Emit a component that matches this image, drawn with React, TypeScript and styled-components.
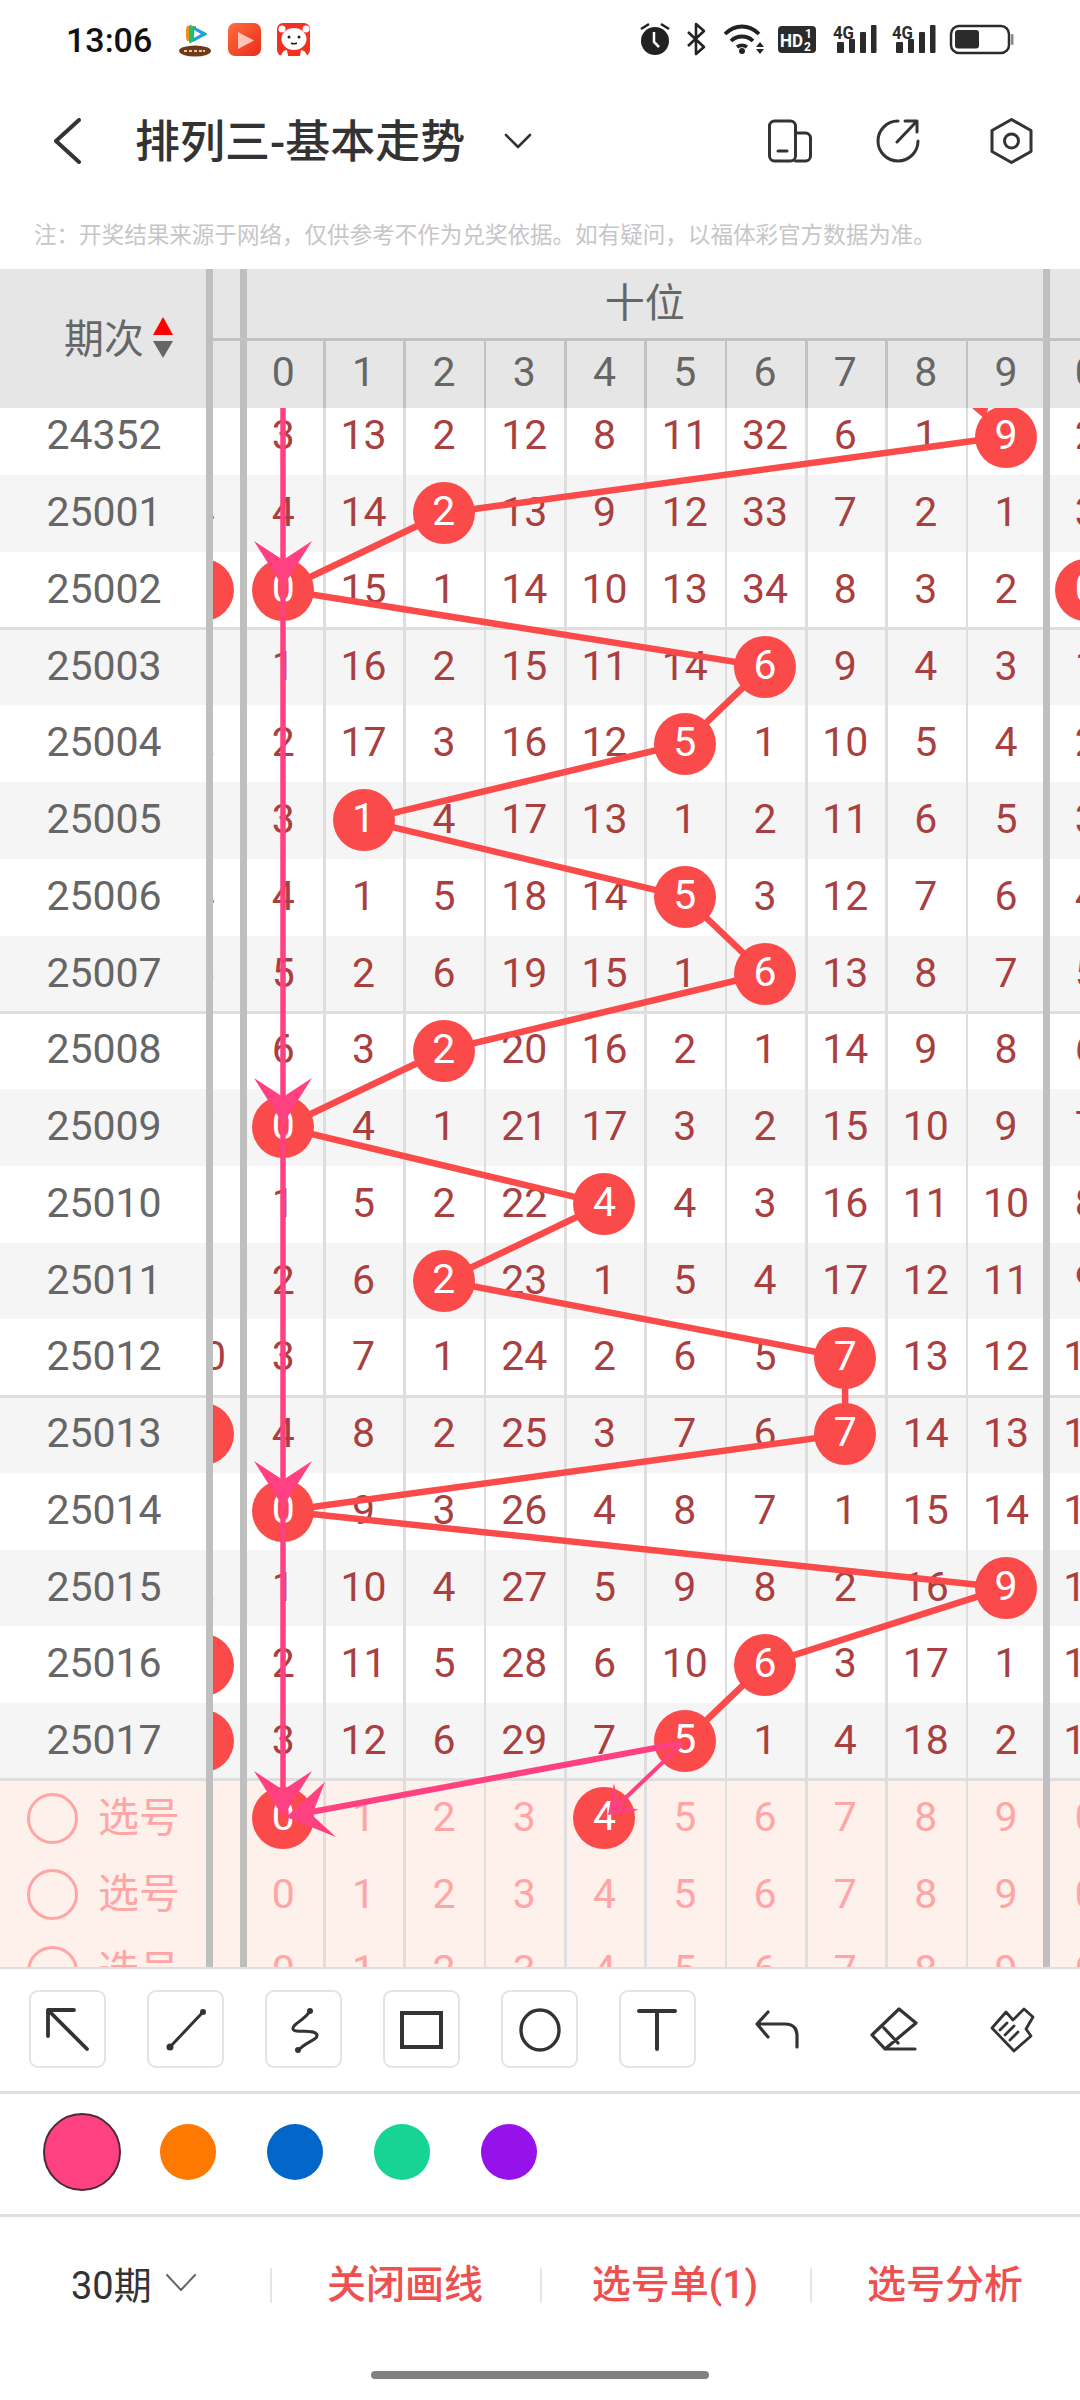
import React from "react";
import styled, { createGlobalStyle } from "styled-components";

const FONT = `Roboto, "Noto Sans CJK SC", sans-serif`;
const RED = "#fb4a4a";
const PINK = "#ff4081";
const INK = "#333";

const Global = createGlobalStyle`
  html, body { margin: 0; padding: 0; background: #fff; }
  body { width: 1080px; height: 2400px; overflow: hidden; font-family: ${FONT}; }
`;

const Page = styled.div`
  width: 1080px;
  height: 2400px;
  display: flex;
  flex-direction: column;
  overflow: hidden;
  background: #fff;
`;

/* ---------- status bar ---------- */
const StatusBar = styled.div`
  height: 80px;
  display: flex;
  align-items: center;
  padding: 0 66px 0 66px;
`;
const Clock = styled.span`
  font-size: 34px;
  font-weight: 500;
  color: #111;
  width: 112px;
  line-height: 1;
`;
const StatusGlyphs = styled.svg`
  display: block;
  margin-left: ${(p) => p.$left || 0}px;
`;

/* ---------- nav ---------- */
const NavBar = styled.div`
  height: 122px;
  display: flex;
  align-items: center;
  padding: 0 46px 0 54px;
`;
const NavGlyph = styled.svg`
  display: block;
  flex: none;
  fill: none;
  stroke: ${INK};
  stroke-linecap: round;
  stroke-linejoin: round;
  margin-left: ${(p) => p.$left || 0}px;
`;
const Title = styled.h1`
  margin: 2px 0 0 53px;
  font-size: 45px;
  font-weight: 500;
  line-height: 1;
  color: ${INK};
  white-space: nowrap;
`;
const Spacer = styled.div`
  flex: 1;
`;
const Note = styled.div`
  height: 67px;
  padding: 0 0 6px 34px;
  box-sizing: border-box;
  display: flex;
  align-items: center;
  font-size: 22.55px;
  color: #c6c6c6;
  white-space: nowrap;
`;

/* ---------- table ---------- */
const PITCH = 80.3;
const Sep = styled.div`
  flex: none;
  width: 7px;
  margin: 0 ${(p) => (p.$inner ? "-4px 0 -3px" : "0")};
  background: #bfbfbf;
  position: relative;
  z-index: 2;
  align-self: stretch;
`;
const HeaderWrap = styled.div`
  height: 139px;
  display: flex;
  background: #e6e6e6;
  position: relative;
  z-index: 6;
  color: #666;
`;
const CornerCell = styled.div`
  width: 206px;
  flex: none;
  box-sizing: border-box;
  padding: 0 0 5px 64px;
  display: flex;
  align-items: center;
  gap: 9px;
  font-size: 40px;
`;
const SortMark = styled.div`
  display: flex;
  flex-direction: column;
  gap: 6px;
  margin-top: 3px;
`;
const Tri = styled.i`
  display: block;
  width: 0;
  height: 0;
  border-left: 10.5px solid transparent;
  border-right: 10.5px solid transparent;
  ${(p) =>
    p.$up
      ? "border-bottom: 18px solid #f00;"
      : "border-top: 17px solid #666;"}
`;
const Track = styled.div`
  flex: 1;
  min-width: 0;
  overflow: hidden;
  display: flex;
  flex-direction: column;
`;
const TrackRow = styled.div`
  display: flex;
  flex: ${(p) => (p.$fill ? "1" : "none")};
  height: ${(p) => (p.$h ? `${p.$h}px` : "auto")};
  margin-left: -50.15px;
  width: 1200px;
  box-sizing: border-box;
  ${(p) => (p.$ruled ? "border-bottom: 3px solid #c2c2c2;" : "")}
`;
const GroupTitle = styled.div`
  width: ${(p) => p.$w}px;
  flex: none;
  box-sizing: border-box;
  padding-bottom: 7px;
  display: flex;
  align-items: center;
  justify-content: center;
  font-size: 40px;
`;
const HeadCell = styled.div`
  width: ${PITCH}px;
  flex: none;
  position: relative;
  text-align: center;
  font-size: 41px;
  line-height: 63px;
  &::after {
    content: "";
    position: absolute;
    top: 0;
    bottom: 0;
    right: -2.3px;
    width: 2.6px;
    background: #c2c2c2;
  }
`;
const Body = styled.div`
  height: 1559px;
  position: relative;
  overflow: hidden;
`;
const Rows = styled.div`
  margin-top: -9.7px;
`;
const Row = styled.div`
  height: 76.75px;
  display: flex;
  position: relative;
  background: ${(p) => (p.$pick ? "#fef0ea" : p.$alt ? "#f5f5f5" : "#fff")};
  ${(p) =>
    p.$rule
      ? `&::after {
           content: "";
           position: absolute;
           left: 0;
           right: 0;
           bottom: -1.5px;
           height: 3px;
           background: #dedede;
           z-index: 1;
         }`
      : ""}
`;
const PeriodCell = styled.div`
  width: 206px;
  flex: none;
  box-sizing: border-box;
  padding-left: 2px;
  text-align: center;
  font-size: 41px;
  line-height: 75px;
  color: #666;
`;
const PickCell = styled.div`
  width: 206px;
  flex: none;
  box-sizing: border-box;
  padding: 0 0 9px 27px;
  display: flex;
  align-items: center;
  gap: 20px;
  font-size: 41px;
  color: #ffa5a5;
`;
const PickRing = styled.i`
  display: block;
  width: 51px;
  height: 51px;
  box-sizing: border-box;
  border: 3px solid #ffa5a5;
  border-radius: 50%;
  margin-top: 9px;
`;
const BodyTrack = styled.div`
  flex: 1;
  min-width: 0;
  overflow: hidden;
  display: flex;
`;
const BodyInner = styled.div`
  display: flex;
  margin-left: -50.15px;
  width: 1200px;
  flex: none;
`;
const Cell = styled.div`
  width: ${PITCH}px;
  flex: none;
  position: relative;
  text-align: center;
  font-size: 41px;
  line-height: 75px;
  color: ${(p) => (p.$pick ? "#ffa5a5" : "#a93f3f")};
  &::after {
    content: "";
    position: absolute;
    top: 0;
    bottom: 0;
    right: -2.3px;
    width: 2.6px;
    background: #dedede;
  }
`;
const Ball = styled.div`
  position: absolute;
  left: 50%;
  top: 50%;
  width: 62px;
  height: 62px;
  margin: -31px 0 0 -31px;
  border-radius: 50%;
  background: ${RED};
  color: #fff;
  line-height: 59px;
  z-index: 4;
`;
const Overlay = styled.svg`
  position: absolute;
  left: 0;
  top: 0;
  z-index: ${(p) => p.$z};
  pointer-events: none;
`;
const TableEnd = styled.div`
  height: 2px;
  background: #dedede;
  flex: none;
`;

/* ---------- tools ---------- */
const ToolBar = styled.div`
  box-sizing: border-box;
  padding: 21px 0 0 29px;
  display: flex;
  gap: 41.1px;
  align-items: flex-start;
  border-bottom: 3px solid #e0e0e0;
  flex: none;
  height: 125px;
`;
const Tool = styled.div`
  width: 77px;
  height: 78px;
  flex: none;
  box-sizing: border-box;
  border: ${(p) => (p.$plain ? "2px solid transparent" : "2px solid #e4e4e4")};
  border-radius: 9px;
  display: flex;
`;
const ToolGlyph = styled.svg`
  display: block;
  margin: -2px;
  fill: none;
  stroke: ${INK};
  stroke-width: 3.4;
  stroke-linecap: round;
  stroke-linejoin: round;
`;
const SwatchBar = styled.div`
  height: 123px;
  box-sizing: border-box;
  padding: 0 0 5px 43px;
  display: flex;
  align-items: center;
  gap: 51px;
  border-bottom: 3px solid #e0e0e0;
  flex: none;
`;
const Swatch = styled.div`
  flex: none;
  width: ${(p) => (p.$on ? 78 : 56)}px;
  height: ${(p) => (p.$on ? 78 : 56)}px;
  box-sizing: border-box;
  border-radius: 50%;
  background: ${(p) => p.$c};
  border: ${(p) => (p.$on ? "2.5px solid #4a2a3a" : "none")};
  margin-right: ${(p) => (p.$on ? -12 : 0)}px;
`;

/* ---------- bottom ---------- */
const ActionBar = styled.div`
  height: 136px;
  flex: none;
  display: grid;
  grid-template-columns: repeat(4, 270px);
  align-items: center;
`;
const Period = styled.div`
  display: flex;
  align-items: center;
  padding: 0 0 5px 71px;
  gap: 14px;
  font-size: 38px;
  color: ${INK};
`;
const Action = styled.div`
  position: relative;
  text-align: center;
  font-size: 39px;
  font-weight: 500;
  line-height: 1;
  color: #ee4f4f;
  &::before {
    content: "";
    position: absolute;
    left: 0;
    top: 2px;
    width: 2px;
    height: 35px;
    background: #e6e6e6;
  }
`;
const HomeBar = styled.div`
  width: 338px;
  height: 8px;
  margin: 18px auto 0;
  border-radius: 4px;
  background: #808080;
  flex: none;
`;

/* ---------- data ---------- */
const tens = [
  [24352, [3, 13, 2, 12, 8, 11, 32, 6, 1, 9], 9],
  [25001, [4, 14, 2, 13, 9, 12, 33, 7, 2, 1], 2],
  [25002, [0, 15, 1, 14, 10, 13, 34, 8, 3, 2], 0],
  [25003, [1, 16, 2, 15, 11, 14, 6, 9, 4, 3], 6],
  [25004, [2, 17, 3, 16, 12, 5, 1, 10, 5, 4], 5],
  [25005, [3, 1, 4, 17, 13, 1, 2, 11, 6, 5], 1],
  [25006, [4, 1, 5, 18, 14, 5, 3, 12, 7, 6], 5],
  [25007, [5, 2, 6, 19, 15, 1, 6, 13, 8, 7], 6],
  [25008, [6, 3, 2, 20, 16, 2, 1, 14, 9, 8], 2],
  [25009, [0, 4, 1, 21, 17, 3, 2, 15, 10, 9], 0],
  [25010, [1, 5, 2, 22, 4, 4, 3, 16, 11, 10], 4],
  [25011, [2, 6, 2, 23, 1, 5, 4, 17, 12, 11], 2],
  [25012, [3, 7, 1, 24, 2, 6, 5, 7, 13, 12], 7],
  [25013, [4, 8, 2, 25, 3, 7, 6, 7, 14, 13], 7],
  [25014, [0, 9, 3, 26, 4, 8, 7, 1, 15, 14], 0],
  [25015, [1, 10, 4, 27, 5, 9, 8, 2, 16, 9], 9],
  [25016, [2, 11, 5, 28, 6, 10, 6, 3, 17, 1], 6],
  [25017, [3, 12, 6, 29, 7, 5, 1, 4, 18, 2], 5],
] as [number, number[], number][];

const prevCol: (number | "ball")[] = [3, 4, "ball", 1, 2, 3, 4, 5, 6, 7, 8, 9, 10, "ball", 1, 2, "ball", "ball"];
const nextCol: (number | "ball")[] = [2, 3, "ball", 1, 2, 3, 4, 5, 6, 7, 8, 9, 10, 11, 12, 13, 14, 15];
const digits = [0, 1, 2, 3, 4, 5, 6, 7, 8, 9];

const cx = (d: number) => 283 + PITCH * d;
const cy = (i: number) => 513.2 + 76.75 * (i - 1);
const redPoints = tens
  .map(([, , hit], i) => `${cx(hit)},${cy(i)}`)
  .join(" ");

function downHead(y: number) {
  return `283,${y - 2} 254,${y - 48} 283,${y - 29} 312,${y - 48}`;
}

const StatusLeft = () => (
  <StatusGlyphs width={134} height={36} viewBox="178 23 134 36">
    <defs>
      <linearGradient id="vid" x1="0" y1="0" x2="1" y2="1">
        <stop offset="0" stopColor="#fb6f3f" />
        <stop offset="1" stopColor="#ee2a1c" />
      </linearGradient>
    </defs>
    <path d="M187 27h9v15h-9c-1.500-3-1.500-12 0-15z" fill="#f58a1f" />
    <path d="M190 27l16 8-16 8z" fill="#17c65c" stroke="#17c65c" strokeWidth="2" strokeLinejoin="round" />
    <path d="M193 27l13 8-13 8c1-5 1-11 0-16z" fill="#1d9cf0" />
    <path d="M194 31l7 4-7 4z" fill="#fff" />
    <ellipse cx="195" cy="52" rx="16" ry="5.500" fill="#6d3b18" />
    <path d="M184 52h3m2 0h3m2 0h3m2 0h3m1 0h2" stroke="#e2c9a6" strokeWidth="2" />
    <rect x="228" y="24" width="33" height="33" rx="7" fill="url(#vid)" />
    <path d="M238 33l16 8.500-16 8.500z" fill="#ffc4b6" />
    <rect x="277" y="24" width="33" height="33" rx="6" fill="#f5301f" />
    <ellipse cx="294" cy="40" rx="12.500" ry="11" fill="#fff" />
    <circle cx="282" cy="30" r="3.500" fill="#fff" />
    <circle cx="306" cy="30" r="3.500" fill="#fff" />
    <path d="M281 57c1-4 3-6 6-6l1 6zM307 57c-1-4-3-6-6-6l-1 6z" fill="#fff" />
    <circle cx="289" cy="38" r="1.500" fill="#222" />
    <circle cx="299" cy="38" r="1.500" fill="#222" />
    <path d="M291 44c2 1 4 1 6 0" stroke="#222" strokeWidth="1.500" fill="none" />
  </StatusGlyphs>
);

const Signal = ({ x }: { x: number }) => (
  <g fill="#2b2b2b">
    <text x={x} y={40} fontSize="19" fontWeight="700" fontFamily="Roboto, sans-serif" textLength={21} lengthAdjust="spacingAndGlyphs">
      4G
    </text>
    <rect x={x + 4} y={43} width={7} height={11} rx={1} />
    <rect x={x + 16} y={40} width={6} height={14} rx={1} />
    <rect x={x + 27} y={33} width={6} height={21} rx={1} />
    <rect x={x + 38} y={26} width={5.500} height={28} rx={1} />
  </g>
);

const StatusRight = () => (
  <StatusGlyphs width={374} height={36} viewBox="641 23 374 36" $left={0}>
    <circle cx="656" cy="42" r="14" fill="#222" />
    <path d="M655 33v10l5 5" stroke="#fff" strokeWidth="2.500" fill="none" />
    <path d="M642 30l8-5M670 30l-8-5" stroke="#222" strokeWidth="2.500" />
    <path d="M689 33l16 15-8 7V25l8 7-16 15" stroke="#222" strokeWidth="2.600" fill="none" strokeLinejoin="round" />
    <path d="M726 35c10-10 24-10 34 0M732 42c6-6 16-6 22 0M738 48c3-2 7-2 10 0" stroke="#222" strokeWidth="3.800" fill="none" />
    <circle cx="743" cy="52" r="3" fill="#222" />
    <path d="M757 48l4-5 4 5zM757 50l4 5 4-5z" fill="#222" />
    <rect x="779" y="27" width="38" height="27" rx="4" fill="#2b2b2b" />
    <text x="781" y="48" fontSize="19" fontWeight="700" fill="#fff" fontFamily="Roboto, sans-serif" textLength={23} lengthAdjust="spacingAndGlyphs">
      HD
    </text>
    <text x="806" y="39" fontSize="12" fontWeight="700" fill="#fff" fontFamily="Roboto, sans-serif">1</text>
    <text x="805" y="52" fontSize="12" fontWeight="700" fill="#fff" fontFamily="Roboto, sans-serif">2</text>
    <Signal x={834} />
    <Signal x={893} />
    <rect x="952" y="27" width="58" height="27" rx="8" fill="none" stroke="#2b2b2b" strokeWidth="2.500" />
    <rect x="956" y="31" width="24" height="18.500" rx="3" fill="#2b2b2b" />
    <rect x="1012" y="35" width="2.500" height="11" rx="1" fill="#888" />
  </StatusGlyphs>
);

const ToolIcon = ({ children }: { children: React.ReactNode }) => (
  <ToolGlyph width={77} height={78} viewBox="0 0 77 78">
    {children}
  </ToolGlyph>
);

export default function App() {
  return (
    <Page>
      <Global />
      <StatusBar>
        <Clock>13:06</Clock>
        <StatusLeft />
        <Spacer />
        <StatusRight />
      </StatusBar>

      <NavBar>
        <NavGlyph width={28} height={46} viewBox="0 0 28 46" strokeWidth={4}>
          <path d="M25 2L2 23l23 21" />
        </NavGlyph>
        <Title>排列三-基本走势</Title>
        <NavGlyph width={28} height={16} viewBox="0 0 28 16" strokeWidth={2.6} $left={39}>
          <path d="M2 2l12 12L26 2" />
        </NavGlyph>
        <Spacer />
        <NavGlyph width={44} height={44} viewBox="769 120 44 44" strokeWidth={3}>
          <rect x="770.500" y="122" width="26" height="40" rx="5" />
          <path d="M796.500 134h10a5 5 0 0 1 5 5v18a5 5 0 0 1-5 5h-10M779 152h9" />
        </NavGlyph>
        <NavGlyph width={44} height={44} viewBox="877 120 44 44" strokeWidth={3} $left={64}>
          <path d="M899 122a20 20 0 1 0 20 20M898 143l20-21M906 122h12v11" />
        </NavGlyph>
        <NavGlyph width={44} height={46} viewBox="991 118 44 46" strokeWidth={3} $left={70}>
          <path d="M1012.500 119.500l19.500 11v21l-19.500 11-19.500-11v-21z" />
          <circle cx="1012.500" cy="141" r="7" />
        </NavGlyph>
      </NavBar>

      <Note>注：开奖结果来源于网络，仅供参考不作为兑奖依据。如有疑问，以福体彩官方数据为准。</Note>

      <HeaderWrap>
        <CornerCell>
          期次
          <SortMark>
            <Tri $up />
            <Tri />
          </SortMark>
        </CornerCell>
        <Sep />
        <Track>
          <TrackRow $h={72} $ruled>
            <GroupTitle $w={PITCH} />
            <Sep $inner />
            <GroupTitle $w={PITCH * 10}>十位</GroupTitle>
            <Sep $inner />
            <GroupTitle $w={PITCH} />
          </TrackRow>
          <TrackRow $fill>
            <HeadCell />
            <Sep $inner />
            {digits.map((d) => (
              <HeadCell key={d}>{d}</HeadCell>
            ))}
            <Sep $inner />
            <HeadCell>0</HeadCell>
          </TrackRow>
        </Track>
      </HeaderWrap>

      <Body>
        <Rows>
          {tens.map(([id, vals, hit], i) => (
            <Row key={id} $alt={i % 2 === 1} $rule={(i + 3) % 5 === 0}>
              <PeriodCell>{id}</PeriodCell>
              <Sep />
              <BodyTrack>
                <BodyInner>
                  <Cell>{prevCol[i] === "ball" ? <Ball>9</Ball> : prevCol[i]}</Cell>
                  <Sep $inner />
                  {vals.map((v, d) => (
                    <Cell key={d}>{d === hit ? <Ball>{hit}</Ball> : v}</Cell>
                  ))}
                  <Sep $inner />
                  <Cell>{nextCol[i] === "ball" ? <Ball>0</Ball> : nextCol[i]}</Cell>
                </BodyInner>
              </BodyTrack>
            </Row>
          ))}
          {[0, 1, 2].map((r) => (
            <Row key={r} $pick>
              <PickCell>
                <PickRing />
                选号
              </PickCell>
              <Sep />
              <BodyTrack>
                <BodyInner>
                  <Cell $pick>9</Cell>
                  <Sep $inner />
                  {digits.map((d) => (
                    <Cell key={d} $pick>
                      {r === 0 && (d === 0 || d === 4) ? <Ball>{d}</Ball> : d}
                    </Cell>
                  ))}
                  <Sep $inner />
                  <Cell $pick>0</Cell>
                </BodyInner>
              </BodyTrack>
            </Row>
          ))}
        </Rows>

        <Overlay $z={3} width={1080} height={1559} viewBox="0 408 1080 1559">
          <polyline points={redPoints} fill="none" stroke={RED} strokeWidth={6.5} />
          <polygon points="972,408 988,408 986,420" fill={RED} />
        </Overlay>
        <Overlay $z={5} width={1080} height={1559} viewBox="0 408 1080 1559">
          <line x1={283} y1={400} x2={283} y2={1815} stroke={PINK} strokeWidth={5.5} />
          <polygon points={downHead(589)} fill={PINK} />
          <polygon points={downHead(1126)} fill={PINK} />
          <polygon points={downHead(1509)} fill={PINK} />
          <polygon points={downHead(1819)} fill={PINK} />
          <line x1={682} y1={1743} x2={295} y2={1815} stroke={PINK} strokeWidth={6} />
          <polygon points="286,1817 325,1782 312,1815 336,1837" fill={PINK} />
          <line x1={682} y1={1744} x2={615} y2={1808} stroke={PINK} strokeWidth={4} />
          <polygon points="608,1815 614,1783 618,1805 639,1810" fill={PINK} />
        </Overlay>
      </Body>
      <TableEnd />

      <ToolBar>
        <Tool>
          <ToolIcon>
            <path d="M58 59L19 20h26M19 20v26" strokeWidth={3.8} />
          </ToolIcon>
        </Tool>
        <Tool>
          <ToolIcon>
            <path d="M56 22L23 57" strokeWidth={3} />
            <circle cx="56" cy="22" r="3" fill={INK} stroke="none" />
            <circle cx="23" cy="57" r="3.500" fill={INK} stroke="none" />
          </ToolIcon>
        </Tool>
        <Tool>
          <ToolIcon>
            <path d="M45 21C40 30 27 34 28 39c1 5 22-1 24 6 1 5-12 7-18 15" strokeWidth={3} />
            <circle cx="45" cy="21" r="3" fill={INK} stroke="none" />
            <circle cx="33" cy="60" r="3" fill={INK} stroke="none" />
          </ToolIcon>
        </Tool>
        <Tool>
          <ToolIcon>
            <rect x="19" y="23" width="39" height="34" strokeWidth={4} strokeLinejoin="miter" />
          </ToolIcon>
        </Tool>
        <Tool>
          <ToolIcon>
            <ellipse cx="39" cy="40" rx="19" ry="20" />
          </ToolIcon>
        </Tool>
        <Tool>
          <ToolIcon>
            <path d="M20 21h36M38 21v38" strokeWidth={4} />
          </ToolIcon>
        </Tool>
        <Tool $plain>
          <ToolIcon>
            <path d="M59 57V46c0-8-4-12-12-12H20M30 22L19 34l11 13" strokeWidth={3.2} />
          </ToolIcon>
        </Tool>
        <Tool $plain>
          <ToolIcon>
            <path d="M43 19l17 14-31 26-13-14zM28 38l14 15M29 59h30" strokeWidth={3.2} />
          </ToolIcon>
        </Tool>
        <Tool $plain>
          <ToolIcon>
            <path d="M18 38l14-16 7 8 11-11 9 8-7 12 5 7-17 15zM26 40l7-7M31 45l9-9M36 50l8-8" strokeWidth={2.8} />
          </ToolIcon>
        </Tool>
      </ToolBar>

      <SwatchBar>
        <Swatch $c={PINK} $on />
        <Swatch $c="#ff7800" />
        <Swatch $c="#0366c9" />
        <Swatch $c="#17d494" />
        <Swatch $c="#9512ea" />
      </SwatchBar>

      <ActionBar>
        <Period>
          30期
          <NavGlyph width={30} height={17} viewBox="0 0 30 17" strokeWidth={2} $left={0}>
            <path d="M1 1l14 15L29 1" stroke="#666" />
          </NavGlyph>
        </Period>
        <Action>关闭画线</Action>
        <Action>选号单(1)</Action>
        <Action>选号分析</Action>
      </ActionBar>
      <HomeBar />
    </Page>
  );
}
